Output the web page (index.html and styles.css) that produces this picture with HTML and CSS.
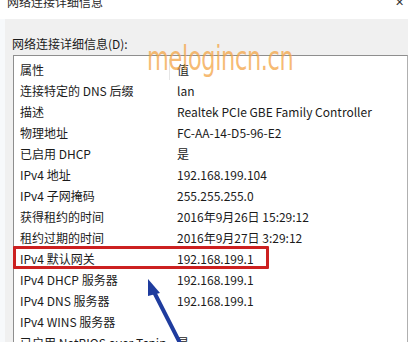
FILE: index.html
```html
<!DOCTYPE html>
<html lang="zh-CN">
<head>
    <meta charset="UTF-8">
    <title>网络连接详细信息</title>
    <link rel="stylesheet" href="styles.css">
</head>
<body>
    <div class="window">
        <div class="titlebar">
            <span class="title">网络连接详细信息</span>
            <span class="close">✕</span>
        </div>

        <div class="content">
            <div class="label">网络连接详细信息(D):</div>

            <div class="list">
                <div class="row head">
                    <span class="key">属性</span>
                    <span class="val">值</span>
                </div>
                <div class="row"><span class="key">连接特定的 DNS 后缀</span><span class="val">lan</span></div>
                <div class="row"><span class="key">描述</span><span class="val">Realtek PCIe GBE Family Controller</span></div>
                <div class="row"><span class="key">物理地址</span><span class="val">FC-AA-14-D5-96-E2</span></div>
                <div class="row"><span class="key">已启用 DHCP</span><span class="val">是</span></div>
                <div class="row"><span class="key">IPv4 地址</span><span class="val">192.168.199.104</span></div>
                <div class="row"><span class="key">IPv4 子网掩码</span><span class="val">255.255.255.0</span></div>
                <div class="row"><span class="key">获得租约的时间</span><span class="val">2016年9月26日 15:29:12</span></div>
                <div class="row"><span class="key">租约过期的时间</span><span class="val">2016年9月27日 3:29:12</span></div>
                <div class="row"><span class="key">IPv4 默认网关</span><span class="val">192.168.199.1</span></div>
                <div class="row"><span class="key">IPv4 DHCP 服务器</span><span class="val">192.168.199.1</span></div>
                <div class="row"><span class="key">IPv4 DNS 服务器</span><span class="val">192.168.199.1</span></div>
                <div class="row"><span class="key">IPv4 WINS 服务器</span><span class="val"></span></div>
                <div class="row"><span class="key">已启用 NetBIOS over Tcpip</span><span class="val">是</span></div>

                <!-- annotation: red box round the gateway row -->
                <div class="mark"></div>
            </div>
        </div>

        <div class="watermark">melogincn.cn</div>

        <svg class="arrow" width="408" height="342" viewBox="0 0 408 342">
            <line x1="181" y1="345" x2="153" y2="290" stroke="#1f3c9e" stroke-width="4" stroke-linecap="round"/>
            <polygon points="148,279 160,293 148,296" fill="#1f3c9e"/>
        </svg>
    </div>
</body>
</html>
```

FILE: styles.css
```css
html, body {
    margin: 0;
    padding: 0;
}

body {
    width: 408px;
    height: 342px;
    overflow: hidden;
    background: #ffffff;
    font-family: "Noto Sans CJK SC", "Noto Sans", sans-serif;
    font-size: 12px;
    color: #1b1b1b;
}

.window {
    position: relative;
    height: 342px;
    overflow: hidden;
}

.titlebar {
    height: 19px;
    background: #ffffff;
    display: flex;
    justify-content: space-between;
    align-items: flex-start;
    padding: 0 4px 0 7px;
}

.title {
    font-size: 12px;
    line-height: 12px;
    margin-top: -4px;
    color: #2a2a2a;
}

.close {
    font-size: 11px;
    line-height: 11px;
    margin-top: -4px;
    color: #333;
}

.content {
    background: #f0f0f0;
    border-left: 5px solid #f7f9fb;
    padding: 18px 0 0 7px;
    height: 323px;
    box-sizing: border-box;
}

.label {
    line-height: 14px;
    margin-bottom: 4px;
}

.list {
    position: relative;
    margin-left: 1px;
    background: #ffffff;
    border: 1px solid #8e8e8e;
    border-right-color: #b0b0b0;
    height: 400px;
}

.row {
    display: flex;
    height: 21px;
    line-height: 21px;
    white-space: nowrap;
}

.row.head {
    height: 24px;
    padding-top: 3px;
    box-sizing: border-box;
}

.key {
    width: 150px;
    padding-left: 6px;
}

.head .key {
    border-right: 1px solid #e6e6e6;
    width: 149px;
}

.val {
    padding-left: 7px;
}

.mark {
    position: absolute;
    left: -1px;
    top: 190px;
    width: 250px;
    height: 17px;
    border: 3px solid #cc2020;
    border-radius: 1px;
}

.watermark {
    position: absolute;
    left: 147px;
    top: 39px;
    font-family: "DejaVu Sans", sans-serif;
    font-size: 33px;
    color: rgba(243, 165, 70, 0.75);
    transform: scaleX(0.68);
    transform-origin: left top;
    letter-spacing: -0.5px;
}

.arrow {
    position: absolute;
    left: 0;
    top: 0;
}
```
